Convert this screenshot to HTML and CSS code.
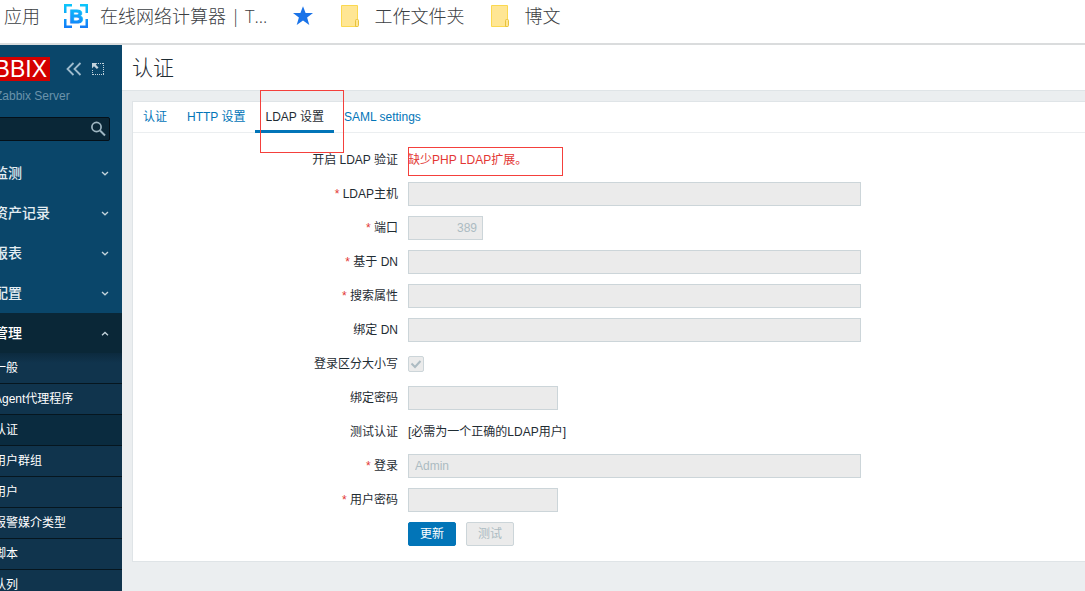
FILE: index.html
```html
<!DOCTYPE html>
<html lang="zh-CN">
<head>
<meta charset="utf-8">
<title>认证</title>
<link rel="stylesheet" href="styles.css">
</head>
<body>
<nav class="bookmarks">
  <a class="bm bm-apps" href="#">应用</a>
  <a class="bm bm-calc" href="#">
    <svg class="bm-logo" viewBox="0 0 24 24" width="24" height="24" aria-hidden="true">
      <defs><linearGradient id="blue" gradientUnits="userSpaceOnUse" x1="0" y1="0" x2="0" y2="24"><stop offset="0" stop-color="#0cc8fb"/><stop offset="1" stop-color="#127bf8"/></linearGradient></defs>
      <path fill="url(#blue)" d="M0 0H8V2.500H2.500V9H0zM16 0H24V9H21.500V2.500H16zM0 15H2.500V21.500H8V24H0zM21.500 15H24V24H16V21.500H21.500z"/>
      <text class="bm-letter" x="12" y="19" text-anchor="middle" fill="url(#blue)" stroke="url(#blue)">B</text>
    </svg>
    <span>在线网络计算器 | T...</span>
  </a>
  <a class="bm bm-star" href="#" aria-label="收藏">
    <svg viewBox="0 0 20 20" width="20" height="20"><path fill="#1a73e8" d="M10 0.300L12.600 7H20L14.100 11.500L16.300 19L10 14.600L3.700 19L5.900 11.500L0 7H7.400z"/></svg>
  </a>
  <a class="bm bm-folder" href="#">
    <svg viewBox="0 0 18 22" width="18" height="22" aria-hidden="true"><path fill="#ffe694" stroke="#fbd850" d="M.5.500H16.500V21.500H.5z"/><path fill="#ffe694" stroke="#e8c33c" d="M14.500 21.500V15.500Q14.500 14.500 15.500 14.500H16.500Q17.500 14.500 17.500 15.500V20.500Q17.500 21.500 16.500 21.500z"/></svg>
    <span>工作文件夹</span>
  </a>
  <a class="bm bm-folder" href="#">
    <svg viewBox="0 0 18 22" width="18" height="22" aria-hidden="true"><path fill="#ffe694" stroke="#fbd850" d="M.5.500H16.500V21.500H.5z"/><path fill="#ffe694" stroke="#e8c33c" d="M14.500 21.500V15.500Q14.500 14.500 15.500 14.500H16.500Q17.500 14.500 17.500 15.500V20.500Q17.500 21.500 16.500 21.500z"/></svg>
    <span>博文</span>
  </a>
</nav>
<div class="app">
  <aside class="sidebar">
    <div class="brand">
      <a class="logo" href="#">ZABBIX</a>
      <button class="icon-btn collapse" type="button" aria-label="折叠">
        <svg viewBox="0 0 16 14" width="16" height="14"><path fill="none" stroke="#9fbccd" stroke-width="1.800" d="M7.500 1L1.500 7L7.500 13M14.500 1L8.500 7L14.500 13"/></svg>
      </button>
      <button class="icon-btn" type="button" aria-label="隐藏">
        <svg viewBox="0 0 12 12" width="12" height="12"><path fill="none" stroke="#c3d3dc" stroke-dasharray="1 1" d="M6 .5H12M11.500 0V12M12 11.500H0M.5 12V6"/><path fill="#c3d3dc" d="M0 0H5.500L3.800 1.700L6.500 4.400L4.900 6L2 3.300L0 5.500z"/></svg>
      </button>
    </div>
    <div class="server">Zabbix Server</div>
    <form class="search">
      <input class="search-input" type="text" aria-label="搜索">
      <button class="icon-btn search-btn" type="button" aria-label="搜索">
        <svg viewBox="0 0 16 16" width="16" height="16"><circle cx="6.500" cy="6" r="4.600" fill="none" stroke="#9fb6c2" stroke-width="1.700"/><path stroke="#9fb6c2" stroke-width="2" d="M10 9.500L15 14.500"/></svg>
      </button>
    </form>
    <ul class="menu">
      <li><a class="menu-item" href="#">监测<svg class="chev" viewBox="0 0 8 6" width="8" height="6"><path d="M1 2L4 4.800L7 2"/></svg></a></li>
      <li><a class="menu-item" href="#">资产记录<svg class="chev" viewBox="0 0 8 6" width="8" height="6"><path d="M1 2L4 4.800L7 2"/></svg></a></li>
      <li><a class="menu-item" href="#">报表<svg class="chev" viewBox="0 0 8 6" width="8" height="6"><path d="M1 2L4 4.800L7 2"/></svg></a></li>
      <li><a class="menu-item" href="#">配置<svg class="chev" viewBox="0 0 8 6" width="8" height="6"><path d="M1 2L4 4.800L7 2"/></svg></a></li>
      <li><a class="menu-item open" href="#">管理<svg class="chev" viewBox="0 0 8 6" width="8" height="6"><path d="M1 5.300L4 2.500L7 5.300"/></svg></a>
        <ul class="submenu">
          <li><a href="#">一般</a></li>
          <li><a href="#">Agent代理程序</a></li>
          <li><a class="current" href="#">认证</a></li>
          <li><a href="#">用户群组</a></li>
          <li><a href="#">用户</a></li>
          <li><a href="#">报警媒介类型</a></li>
          <li><a href="#">脚本</a></li>
          <li><a href="#">队列</a></li>
        </ul>
      </li>
    </ul>
  </aside>
  <main class="content">
    <header class="page-head"><h1>认证</h1></header>
    <section class="panel">
      <nav class="tabs">
        <a href="#">认证</a>
        <a href="#">HTTP 设置</a>
        <a class="active" href="#">LDAP 设置<span class="mark mark-tab"></span></a>
        <a href="#">SAML settings</a>
      </nav>
      <form class="form">
        <span class="label">开启 LDAP 验证</span>
        <div class="field error">缺少PHP LDAP扩展。<span class="mark mark-error"></span></div>
        <label class="label required" for="host">LDAP主机</label>
        <div class="field"><input class="text" id="host" type="text" disabled></div>
        <label class="label required" for="port">端口</label>
        <div class="field"><input class="text port" id="port" type="text" value="389" disabled></div>
        <label class="label required" for="base">基于 DN</label>
        <div class="field"><input class="text" id="base" type="text" disabled></div>
        <label class="label required" for="attr">搜索属性</label>
        <div class="field"><input class="text" id="attr" type="text" disabled></div>
        <label class="label" for="bind">绑定 DN</label>
        <div class="field"><input class="text" id="bind" type="text" disabled></div>
        <label class="label" for="case">登录区分大小写</label>
        <div class="field"><span class="check"><input id="case" type="checkbox" checked disabled><svg viewBox="0 0 16 16" width="16" height="16" aria-hidden="true"><path fill="none" stroke="#acbbc2" stroke-width="2" d="M3.500 7.500L7 11L12.500 5"/></svg></span></div>
        <label class="label" for="bindpw">绑定密码</label>
        <div class="field"><input class="text password" id="bindpw" type="password" disabled></div>
        <span class="label">测试认证</span>
        <div class="field">[必需为一个正确的LDAP用户]</div>
        <label class="label required" for="login">登录</label>
        <div class="field"><input class="text" id="login" type="text" value="Admin" disabled></div>
        <label class="label required" for="userpw">用户密码</label>
        <div class="field"><input class="text password" id="userpw" type="password" disabled></div>
        <div class="field actions">
          <button class="btn primary" type="button">更新</button>
          <button class="btn" type="button" disabled>测试</button>
        </div>
      </form>
    </section>
  </main>
</div>
</body>
</html>
```
FILE: styles.css
```css
* { box-sizing: border-box; }
body {
  margin: 0;
  height: 100vh;
  display: flex;
  flex-direction: column;
  overflow: hidden;
  background: #ebeef0;
  color: #1f2c33;
  font: 12px/24px "Liberation Sans", "Noto Sans CJK SC", sans-serif;
}
a { text-decoration: none; color: #0275b8; }
ul { list-style: none; margin: 0; padding: 0; }
svg { display: block; flex: none; }
input, button { font: inherit; }

.bookmarks {
  display: flex;
  align-items: center;
  height: 45px;
  padding: 0 4px 11px;
  background: #fff;
  border-bottom: 2px solid #dadcdd;
  flex: none;
}
.bm {
  display: flex;
  align-items: center;
  color: #3c4043;
  font: 300 18px/32px "Open Sans", "Noto Sans CJK SC", sans-serif;
  white-space: nowrap;
}
.bm-apps { margin-right: 24px; }
.bm-calc { gap: 12px; margin-right: 26px; }
.bm-star { margin-right: 28px; }
.bm-folder { gap: 15px; margin-right: 27px; }
.bm-letter { font: 700 19px "Liberation Sans", sans-serif; }

.app { display: flex; flex: 1; min-height: 0; }
.sidebar {
  flex: 0 0 122px;
  background: #0a466a;
  overflow: hidden;
}
.brand {
  display: flex;
  align-items: center;
  justify-content: flex-end;
  height: 48px;
  padding-right: 18px;
}
.logo {
  background: #d40000;
  color: #fff;
  font-size: 23px;
  line-height: 24px;
  padding: 0 3px;
  margin-right: 16px;
}
.icon-btn { padding: 0; border: 0; background: none; }
.collapse { margin-right: 10px; }
.server { margin-left: -5px; line-height: 6px; color: #6b93ab; }
.search {
  display: flex;
  align-items: center;
  height: 24px;
  margin: 18px 12px 12px -6px;
  padding-right: 3px;
  background: #0a2737;
  border: 1px solid #041019;
  border-radius: 2px;
}
.search-input { flex: 1; min-width: 0; border: 0; background: none; color: #fff; }
.menu-item {
  display: flex;
  align-items: center;
  justify-content: space-between;
  height: 40px;
  padding-right: 13px;
  text-indent: -6px;
  color: #e4edf2;
  font-size: 14px;
  font-weight: 500;
}
.chev { fill: none; stroke: #c3d3dc; stroke-width: 1.3; }
.menu-item.open { background: #0a2737; color: #fff; }
.submenu { background: #10344d; }
.submenu a {
  display: block;
  line-height: 30px;
  text-indent: -6px;
  border-bottom: 1px solid #06161f;
  color: #fff;
}
.submenu li:first-child a { background: linear-gradient(#0c2a3e, #10344d 10px); }
.submenu .current { background: #0a2b3f; }

.content { flex: 1; min-width: 0; }
.page-head {
  height: 46px;
  padding: 0 10px;
  background: #fff;
  border-bottom: 1px solid #dfe4e7;
}
h1 { margin: 0; font-size: 21px; line-height: 45px; font-weight: 300; }
.panel {
  margin: 10px 0 0 10px;
  background: #fff;
  border: 1px solid #dfe4e7;
  border-right: 0;
}
.tabs { display: flex; border-bottom: 1px solid #ebeef0; }
.tabs a { position: relative; line-height: 30px; padding: 0 10px; }
.tabs .active { color: #1f2c33; box-shadow: inset 0 -2px #0275b8, 0 1px #0275b8; }
.mark { position: absolute; border: 1px solid #f4403c; pointer-events: none; }
.mark-tab { left: 5px; right: -10px; top: -12px; height: 63px; }
.mark-error { left: 0; top: -1px; width: 155px; height: 29px; }

.form {
  display: grid;
  grid-template-columns: 265px minmax(0, 1fr);
  gap: 10px;
  padding: 15px 10px 15px 0;
}
.label { text-align: right; }
.required::before { content: "* "; color: #e33734; }
.field { position: relative; display: flex; align-items: center; height: 24px; }
.error { color: #e33734; }
.text {
  width: 100%;
  max-width: 453px;
  height: 24px;
  padding: 0 6px;
  border: 1px solid #ccd5d9;
  background: #ebebeb;
  color: #acbbc2;
}
.port { max-width: 75px; padding: 0 5px; text-align: right; }
.password { max-width: 150px; }
.check { display: grid; }
.check > * { grid-area: 1 / 1; }
.check input {
  appearance: none;
  width: 16px;
  height: 16px;
  margin: 0;
  border: 1px solid #ccd5d9;
  border-radius: 2px;
  background: #ebebeb;
}
.check svg { z-index: 1; }
.actions { grid-column: 2; gap: 10px; }
.btn {
  height: 24px;
  padding: 0 11px;
  line-height: 22px;
  border: 1px solid #ccd5d9;
  border-radius: 2px;
  background: #ebebeb;
  color: #acbbc2;
}
.primary { background: #0275b8; border-color: #0275b8; color: #fff; }
```
